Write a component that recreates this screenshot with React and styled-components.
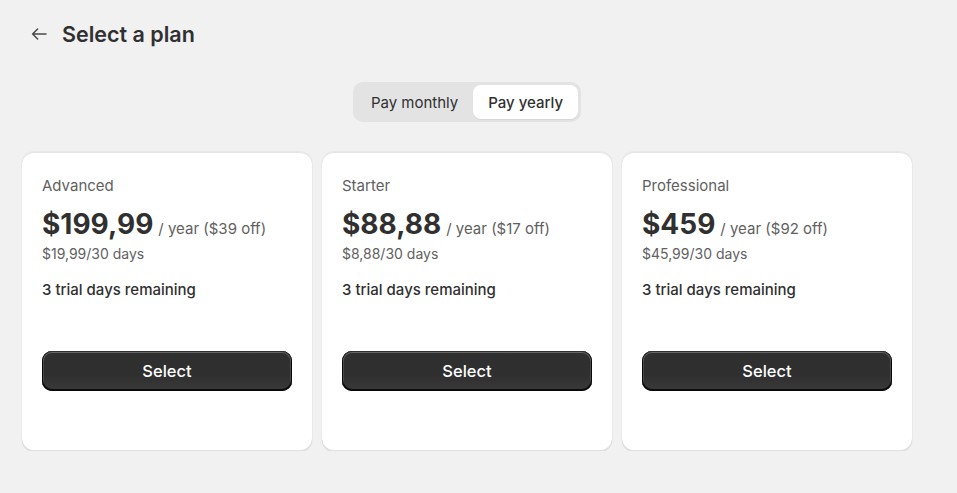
import React, { useState } from 'react';
import styled, { createGlobalStyle } from 'styled-components';

const plans = [
  { name: 'Advanced', price: '$199,99', note: '/ year ($39 off)', monthly: '$19,99/30 days' },
  { name: 'Starter', price: '$88,88', note: '/ year ($17 off)', monthly: '$8,88/30 days' },
  { name: 'Professional', price: '$459', note: '/ year ($92 off)', monthly: '$45,99/30 days' },
];

const GlobalStyle = createGlobalStyle`
  body {
    margin: 0;
    background: #f1f1f1;
    font-family: Inter, "Noto Sans", sans-serif;
    color: #303030;
    -webkit-font-smoothing: antialiased;
  }
`;

const App = () => {
  const [cycle, setCycle] = useState('yearly');

  return (
    <>
      <GlobalStyle />
      <Page>
        <Header>
          <BackButton aria-label="Back">
            <svg width="20" height="20" viewBox="0 0 20 20" fill="none">
              <path d="M17 10H3.6M8.6 5 3.6 10l5 5" stroke="#4a4a4a" strokeWidth="1.5" strokeLinecap="round" strokeLinejoin="round" />
            </svg>
          </BackButton>
          <Title>Select a plan</Title>
        </Header>

        <ToggleRow>
          <Toggle>
            <ToggleOption active={cycle === 'monthly'} onClick={() => setCycle('monthly')}>
              Pay monthly
            </ToggleOption>
            <ToggleOption active={cycle === 'yearly'} onClick={() => setCycle('yearly')}>
              Pay yearly
            </ToggleOption>
          </Toggle>
        </ToggleRow>

        <Cards>
          {plans.map((p) => (
            <Card key={p.name}>
              <PlanName>{p.name}</PlanName>
              <PriceLine>
                <Price>{p.price}</Price>
                <PriceNote>{p.note}</PriceNote>
              </PriceLine>
              <Monthly>{p.monthly}</Monthly>
              <Trial>3 trial days remaining</Trial>
              <SelectButton>Select</SelectButton>
            </Card>
          ))}
        </Cards>
      </Page>
    </>
  );
};

const Page = styled.div`
  width: 890px;
  padding: 18px 0 0 22px;
`;

const Header = styled.div`
  display: flex;
  align-items: center;
  gap: 7px;
  height: 32px;
`;

const BackButton = styled.button`
  display: flex;
  align-items: center;
  justify-content: center;
  width: 33px;
  height: 32px;
  padding: 0;
  border: none;
  border-radius: 8px;
  background: transparent;
  cursor: pointer;
`;

const Title = styled.h1`
  margin: 0;
  font-size: 21.5px;
  font-weight: 600;
  line-height: 32px;
  color: #303030;
`;

const ToggleRow = styled.div`
  display: flex;
  justify-content: center;
  margin-top: 32px;
`;

const Toggle = styled.div`
  display: flex;
  padding: 3px;
  border-radius: 10px;
  background: #e3e3e3;
`;

const ToggleOption = styled.button`
  height: 34px;
  padding: 0 15px;
  border: none;
  border-radius: 8px;
  font-family: inherit;
  font-size: 15px;
  font-weight: ${(p) => (p.active ? 500 : 400)};
  color: #303030;
  background: ${(p) => (p.active ? '#ffffff' : 'transparent')};
  box-shadow: ${(p) => (p.active ? '0 1px 0 rgba(0,0,0,0.05)' : 'none')};
  cursor: pointer;
`;

const Cards = styled.div`
  display: grid;
  grid-template-columns: repeat(3, 1fr);
  gap: 10px;
  margin-top: 30px;
`;

const Card = styled.div`
  display: flex;
  flex-direction: column;
  padding: 24px 20px 60px;
  border-radius: 12px;
  background: #ffffff;
  box-shadow: 0 1px 0 rgba(26, 26, 26, 0.07), 0 1px 0 rgba(204, 204, 204, 0.5) inset, 0 -1px 0 rgba(0, 0, 0, 0.12) inset, 0 0 0 1px rgba(0, 0, 0, 0.03);
`;

const PlanName = styled.div`
  font-size: 15px;
  line-height: 20px;
  color: #616161;
`;

const PriceLine = styled.div`
  display: flex;
  align-items: baseline;
  gap: 5px;
  margin-top: 10px;
`;

const Price = styled.span`
  font-size: 28px;
  font-weight: 650;
  line-height: 36px;
  color: #303030;
`;

const PriceNote = styled.span`
  font-size: 15px;
  color: #616161;
`;

const Monthly = styled.div`
  margin-top: 4px;
  font-size: 14px;
  line-height: 16px;
  color: #616161;
`;

const Trial = styled.div`
  margin-top: 18px;
  font-size: 15px;
  font-weight: 550;
  line-height: 20px;
  color: #303030;
`;

const SelectButton = styled.button`
  margin-top: 51px;
  height: 40px;
  border: none;
  border-radius: 10px;
  font-family: inherit;
  font-size: 16.5px;
  font-weight: 550;
  color: #ffffff;
  background: linear-gradient(180deg, #303030 0%, #2f2f2f 60%, #3a3a3a 100%);
  box-shadow: 0 -1px 0 1px rgba(0, 0, 0, 0.8) inset, 0 0 0 1px #303030 inset, 0 0.5px 0 1.5px #666 inset;
  cursor: pointer;
`;

export default App;
